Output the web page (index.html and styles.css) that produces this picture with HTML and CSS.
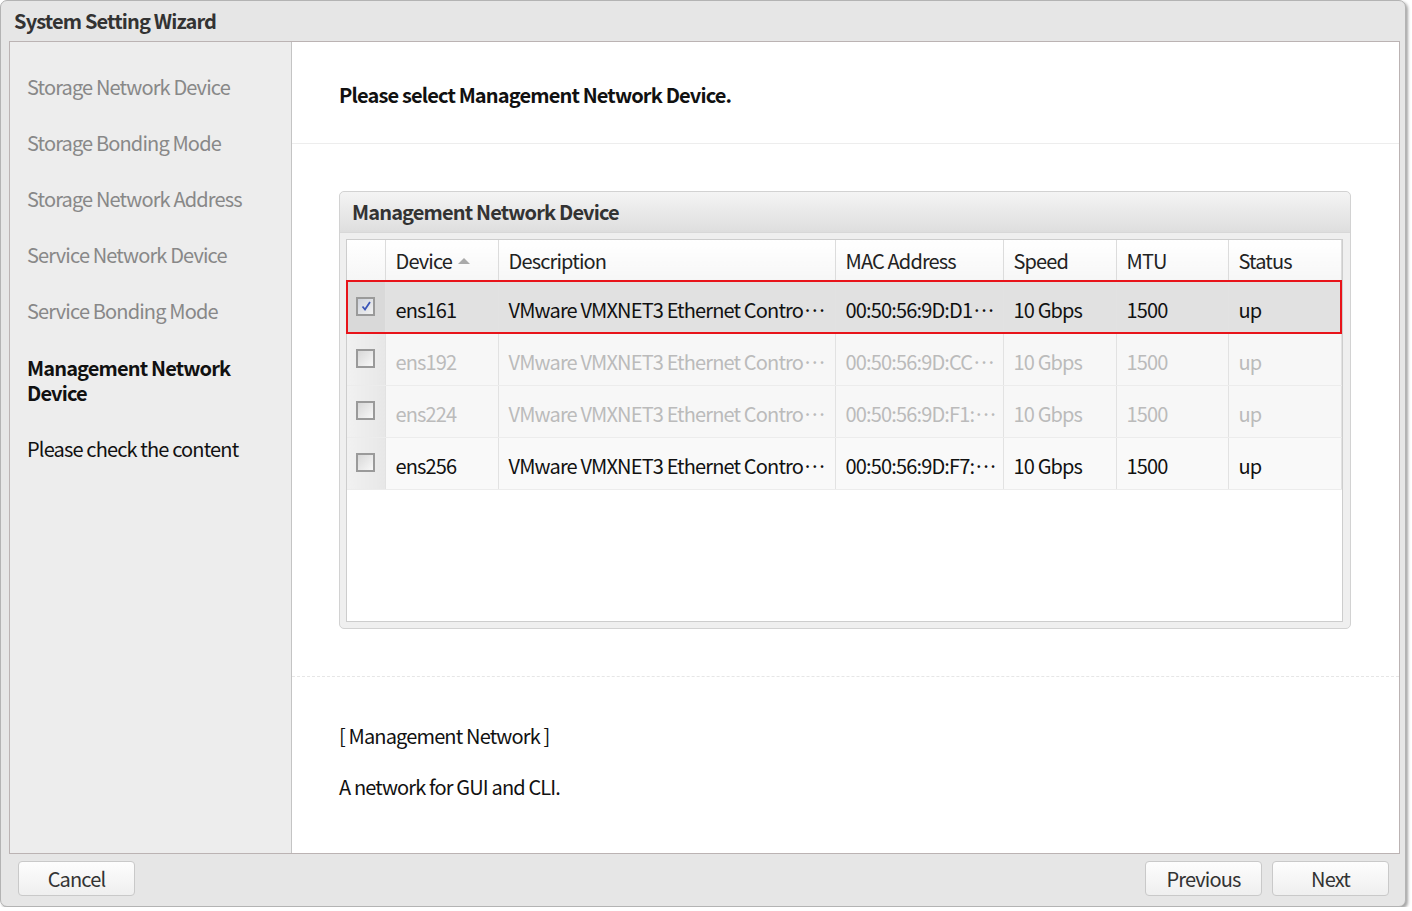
FILE: index.html
```html
<!DOCTYPE html>
<html>
<head>
<meta charset="utf-8">
<link rel="stylesheet" href="styles.css">
</head>
<body>
<div class="window">
  <div class="titlebar">System Setting Wizard</div>
  <div class="content">
    <nav class="sidebar">
      <div class="step done">Storage Network Device</div>
      <div class="step done">Storage Bonding Mode</div>
      <div class="step done">Storage Network Address</div>
      <div class="step done">Service Network Device</div>
      <div class="step done">Service Bonding Mode</div>
      <div class="step current">Management Network<br>Device</div>
      <div class="step todo">Please check the content</div>
    </nav>
    <main class="main">
      <div class="heading">Please select Management Network Device.</div>
      <div class="panel-wrap">
        <div class="panel">
          <div class="panel-title">Management Network Device</div>
          <div class="grid">
            <table>
              <colgroup>
                <col class="c0"><col class="c1"><col class="c2"><col class="c3"><col class="c4"><col class="c5"><col class="c6">
              </colgroup>
              <thead>
                <tr>
                  <th class="chk"></th>
                  <th>Device <span class="sort"></span></th>
                  <th>Description</th>
                  <th>MAC Address</th>
                  <th>Speed</th>
                  <th>MTU</th>
                  <th>Status</th>
                </tr>
              </thead>
              <tbody>
                <tr class="selected">
                  <td class="chk"><span class="box checked"><svg viewBox="0 0 12 12" width="12" height="12"><path d="M2.5 6.5 L5 9.5 L10 2" fill="none" stroke="#3b55b8" stroke-width="1.8"/></svg></span></td>
                  <td>ens161</td>
                  <td>VMware VMXNET3 Ethernet Contro<span class="dots">···</span></td>
                  <td>00:50:56:9D:D1<span class="dots">···</span></td>
                  <td>10 Gbps</td>
                  <td>1500</td>
                  <td>up</td>
                </tr>
                <tr class="disabled">
                  <td class="chk"><span class="box"></span></td>
                  <td>ens192</td>
                  <td>VMware VMXNET3 Ethernet Contro<span class="dots">···</span></td>
                  <td>00:50:56:9D:CC<span class="dots">···</span></td>
                  <td>10 Gbps</td>
                  <td>1500</td>
                  <td>up</td>
                </tr>
                <tr class="disabled">
                  <td class="chk"><span class="box"></span></td>
                  <td>ens224</td>
                  <td>VMware VMXNET3 Ethernet Contro<span class="dots">···</span></td>
                  <td>00:50:56:9D:F1:<span class="dots">···</span></td>
                  <td>10 Gbps</td>
                  <td>1500</td>
                  <td>up</td>
                </tr>
                <tr class="normal">
                  <td class="chk"><span class="box"></span></td>
                  <td>ens256</td>
                  <td>VMware VMXNET3 Ethernet Contro<span class="dots">···</span></td>
                  <td>00:50:56:9D:F7:<span class="dots">···</span></td>
                  <td>10 Gbps</td>
                  <td>1500</td>
                  <td>up</td>
                </tr>
              </tbody>
            </table>
          </div>
        </div>
      </div>
      <div class="info">
        <p class="info-title">[ Management Network ]</p>
        <p class="info-text">A network for GUI and CLI.</p>
      </div>
    </main>
  </div>
  <div class="footer">
    <button class="btn">Cancel</button>
    <div class="spacer"></div>
    <button class="btn">Previous</button>
    <button class="btn">Next</button>
  </div>
</div>
</body>
</html>
```
FILE: styles.css
```css
* { box-sizing: border-box; }
html, body { margin: 0; padding: 0; background: #ffffff; }
body {
  font-family: "Noto Sans CJK KR", "Noto Sans", sans-serif;
  font-size: 20px;
  letter-spacing: -0.85px;
  color: #111;
}
.window {
  width: 1406px;
  height: 907px;
  border: 1px solid #b3b3b3;
  border-radius: 7px;
  background: #e6e6e6;
  box-shadow: 2px 2px 3px rgba(0,0,0,0.35);
  display: flex;
  flex-direction: column;
}
.titlebar {
  height: 40px;
  padding-left: 13px;
  font-weight: bold;
  font-size: 20px;
  line-height: 40px;
  color: #333;
}
.content {
  height: 813px;
  margin: 0 5px 0 8px;
  border: 1px solid #bbb3b3;
  display: flex;
  background: #fff;
}
.sidebar {
  width: 282px;
  flex: none;
  background: #ededed;
  border-right: 1px solid #c4c4c4;
  padding-top: 17px;
  padding-left: 17px;
}
.step {
  padding: 16px 0;
  line-height: 24px;
}
.step.done { color: #888; }
.step.current { font-weight: bold; color: #111; line-height: 25px; }
.step.todo { color: #111; }
.main {
  flex: 1;
  display: flex;
  flex-direction: column;
}
.heading {
  height: 102px;
  padding: 41px 0 0 47px;
  font-weight: bold;
  line-height: 24px;
  border-bottom: 1px solid #ededed;
}
.panel-wrap {
  padding: 47px 48px 47px 47px;
  border-bottom: 1px dashed #e6e6e6;
}
.panel {
  height: 438px;
  border: 1px solid #d2d2d2;
  border-radius: 5px;
  background: #efefef;
  padding: 0 7px 6px 6px;
  display: flex;
  flex-direction: column;
}
.panel-title {
  height: 41px;
  margin: 0 -7px 0 -6px;
  padding-left: 12px;
  line-height: 40px;
  font-weight: bold;
  color: #333;
  border-radius: 5px 5px 0 0;
  background: linear-gradient(#f4f4f4, #dedede);
  border-bottom: 1px solid #d8d8d8;
}
.grid {
  margin-top: 6px;
  flex: 1;
  border: 1px solid #cdcdcd;
  background: #fff;
}
table {
  border-collapse: collapse;
  table-layout: fixed;
  width: 994px;
}
col.c0 { width: 38px; }
col.c1 { width: 113px; }
col.c2 { width: 337px; }
col.c3 { width: 168px; }
col.c4 { width: 113px; }
col.c5 { width: 112px; }
col.c6 { width: 113px; }
th, td {
  text-align: left;
  white-space: nowrap;
  overflow: hidden;
  padding: 0 0 0 10px;
  font-weight: normal;
}
th {
  height: 41px;
  background: linear-gradient(#ffffff, #f6f6f6);
  border-right: 1px solid #dcdcdc;
  border-bottom: 1px solid #d6d6d6;
  color: #222;
}
td {
  height: 52px;
  padding-top: 4px;
  border-right: 1px solid #e2e2e2;
  border-bottom: 1px solid #ececec;
}
.dots { letter-spacing: -4px; margin-left: -1px; }
th.chk, td.chk { padding: 0; text-align: center; }
td.chk { background: linear-gradient(90deg, #f1f1f1, #e7e7e7); }
.sort {
  display: inline-block;
  width: 0; height: 0;
  border-left: 6px solid transparent;
  border-right: 6px solid transparent;
  border-bottom: 6px solid #aaa;
  vertical-align: 5px;
  margin-left: 2px;
}
tr.selected td { background: #e1e1e1; color: #111; border-bottom: 1px dotted #777; }
tr.selected td.chk { background: #d9d9d9; }
tr.selected { outline: 2px solid #e8141a; outline-offset: -1px; }
tr.disabled td { background: #f7f7f7; color: #bbb; }
tr.disabled td.chk { background: linear-gradient(90deg, #f1f1f1, #e7e7e7); }
tr.normal td { background: #f9f9f9; color: #111; }
tr.normal td.chk { background: linear-gradient(90deg, #f1f1f1, #e7e7e7); }
.box {
  display: inline-block;
  width: 19px;
  height: 19px;
  border: 2px solid #9a9a9a;
  background: linear-gradient(135deg, #d8d8d8, #f8f8f8);
  vertical-align: middle;
  margin-top: -7px;
  position: relative;
}
.box.checked { background: linear-gradient(135deg, #cfd3dc, #f2f2f2); }
.box svg { position: absolute; left: 2px; top: 1px; }
.info {
  padding: 47px 0 0 47px;
}
.info p { margin: 0; line-height: 24px; }
.info-text { margin-top: 27px !important; }
.footer {
  flex: 1;
  display: flex;
  align-items: flex-start;
  padding: 7px 16px 0 17px;
  gap: 10px;
}
.spacer { flex: 1; }
.btn {
  width: 117px;
  height: 35px;
  border: 1px solid #c9c9c9;
  border-radius: 4px;
  background: linear-gradient(#fdfdfd, #efefef);
  font-family: "Noto Sans CJK KR", "Noto Sans", sans-serif;
  font-size: 20px;
  letter-spacing: -0.85px;
  color: #333;
  padding: 0;
  line-height: 33px;
}
```
